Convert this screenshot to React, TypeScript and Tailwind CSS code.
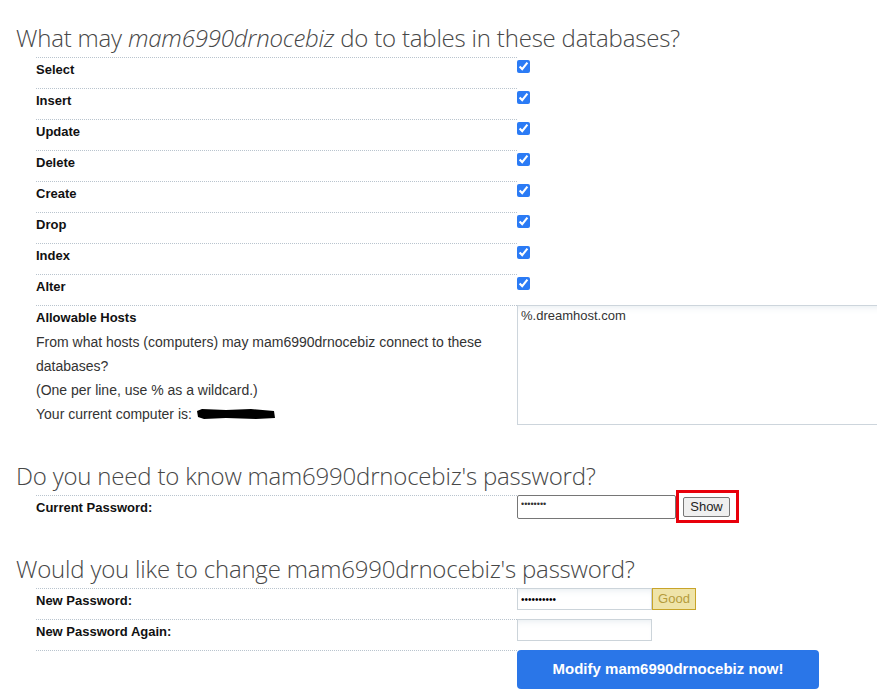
import React from "react";

const perms = ["Select", "Insert", "Update", "Delete", "Create", "Drop", "Index", "Alter"];
const user = "mam6990drnocebiz";

function Row({ label, children }: { label: React.ReactNode; children?: React.ReactNode }) {
  return (
    <div className="flex">
      <div className="w-[481px] shrink-0 border-t border-dotted border-[#b9c4ce] text-[13px] leading-[24px] pb-[6px]">
        {label}
      </div>
      <div className="flex-1">{children}</div>
    </div>
  );
}

const headingCls =
  "text-[24px] leading-[38px] font-light text-[#474747] font-['Open_Sans',sans-serif] tracking-[-0.2px]";

export default function App() {
  return (
    <div
      className="w-[877px] h-[700px] overflow-hidden bg-white pl-[16px] text-[#222]"
      style={{ fontFamily: "'Liberation Sans', Arial, sans-serif" }}
    >
      <h2 className={`mt-[19px] ${headingCls}`}>
        What may <em>{user}</em> do to tables in these databases?
      </h2>
      <div className="ml-[20px]">
        {perms.map((p) => (
          <Row key={p} label={<span className="font-bold text-[#111]">{p}</span>}>
            <input type="checkbox" defaultChecked className="mt-[3px] w-[13px] h-[13px] accent-[#2b7bf5] block" />
          </Row>
        ))}
        <Row
          label={
            <div className="text-[#333] text-[14px]">
              <div className="font-bold text-[#111] text-[13px]">Allowable Hosts</div>
              <div className="pr-[20px]">From what hosts (computers) may {user} connect to these databases?</div>
              <div>(One per line, use % as a wildcard.)</div>
              <div className="flex items-center">
                <span>Your current computer is:&nbsp;</span>
                <svg width="80" height="12" viewBox="0 0 80 12" className="block">
                  <path d="M1 3 L6 1 L30 2 L55 1 L78 3 L79 10 L60 11 L30 10 L8 11 L2 9 Z" fill="#000" />
                </svg>
              </div>
            </div>
          }
        >
          <textarea
            readOnly
            defaultValue="%.dreamhost.com"
            className="block w-[380px] h-[120px] border border-[#cdd5dc] px-[3px] py-[2px] text-[13px] leading-[16px] text-[#333] resize-none outline-none shadow-[inset_0_6px_8px_-6px_#dfe6ec]"
          />
        </Row>
      </div>

      <h2 className={`mt-[25px] ${headingCls}`}>Do you need to know {user}'s password?</h2>
      <div className="ml-[20px]">
        <Row label={<span className="font-bold text-[#111]">Current Password:</span>}>
          <div className="flex items-start">
            <input
              type="password"
              readOnly
              defaultValue="password"
              className="w-[159px] h-[24px] border border-[#767676] rounded-[2px] px-[3px] pb-[6px] text-[9px] text-[#333] outline-none"
            />
            <span className="-mt-[5px] border-[3px] border-[#e8000b] pl-[4px] pr-[6px] pt-[4px] pb-[3px]">
              <button className="block w-[47px] h-[20px] bg-[#efefef] border border-[#767676] rounded-[2px] text-[13px] leading-[18px] text-[#222]">
                Show
              </button>
            </span>
          </div>
        </Row>
      </div>

      <h2 className={`mt-[24px] ${headingCls}`}>Would you like to change {user}'s password?</h2>
      <div className="ml-[20px]">
        <Row label={<span className="font-bold text-[#111]">New Password:</span>}>
          <div className="flex">
            <input
              type="password"
              readOnly
              defaultValue="abcdefghij"
              className="w-[135px] h-[22px] border border-[#ccd4da] px-[3px] text-[10px] text-black outline-none shadow-[inset_0_6px_8px_-6px_#dfe6ec]"
            />
            <span className="w-[44px] h-[22px] bg-[#efe4a9] border border-[#c8a42a] text-[13px] leading-[20px] text-[#b59c3c] text-center">
              Good
            </span>
          </div>
        </Row>
        <Row label={<span className="font-bold text-[#111]">New Password Again:</span>}>
          <input
            type="password"
            readOnly
            className="block w-[135px] h-[22px] border border-[#ccd4da] outline-none shadow-[inset_0_6px_8px_-6px_#dfe6ec]"
          />
        </Row>
        <Row label={null}>
          <button className="block w-[302px] h-[39px] rounded-[4px] bg-[#2a76e8] text-white font-bold text-[15px]">
            Modify {user} now!
          </button>
        </Row>
      </div>
    </div>
  );
}
